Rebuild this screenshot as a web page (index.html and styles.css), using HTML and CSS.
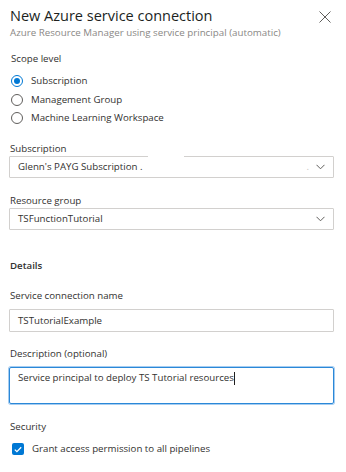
FILE: index.html
```html
<!DOCTYPE html>
<html>
<head>
<meta charset="utf-8">
<link rel="stylesheet" href="styles.css">
</head>
<body>
<div class="panel">
  <div class="header">
    <div class="titles">
      <h1 class="title">New Azure service connection</h1>
      <div class="subtitle">Azure Resource Manager using service principal (automatic)</div>
    </div>
    <svg class="close" width="12" height="12" viewBox="0 0 12 12"><path d="M0.5 0.5L11.5 11.5M11.5 0.5L0.5 11.5" stroke="#605e5c" stroke-width="1" fill="none"/></svg>
  </div>

  <div class="scope">
    <div class="label">Scope level</div>
    <div class="radios">
      <div class="radio-row"><span class="radio checked"></span><span>Subscription</span></div>
      <div class="radio-row"><span class="radio"></span><span>Management Group</span></div>
      <div class="radio-row"><span class="radio"></span><span>Machine Learning Workspace</span></div>
    </div>
  </div>

  <div class="field top-field first">
    <div class="label">Subscription</div>
    <div class="box select">
      <span class="value">Glenn's PAYG Subscription .</span>
      <span class="dot">.</span>
      <svg class="chev" width="9" height="6" viewBox="0 0 9 6"><path d="M0.5 0.8L4.5 4.8L8.5 0.8" stroke="#605e5c" stroke-width="1" fill="none"/></svg>
      <span class="redact"></span>
    </div>
  </div>

  <div class="field top-field">
    <div class="label">Resource group</div>
    <div class="box select">
      <span class="value">TSFunctionTutorial</span>
      <svg class="chev" width="9" height="6" viewBox="0 0 9 6"><path d="M0.5 0.8L4.5 4.8L8.5 0.8" stroke="#605e5c" stroke-width="1" fill="none"/></svg>
    </div>
  </div>

  <div class="section">Details</div>

  <div class="field detail-field">
    <div class="label">Service connection name</div>
    <div class="box"><span class="value">TSTutorialExample</span></div>
  </div>

  <div class="field detail-field">
    <div class="label">Description (optional)</div>
    <div class="box textarea"><span class="value">Service principal to deploy TS Tutorial resources</span><span class="caret"></span></div>
  </div>

  <div class="security">
    <div class="label">Security</div>
    <div class="check-row">
      <span class="checkbox"><svg width="8" height="7" viewBox="0 0 8 7"><path d="M0.8 3.6L2.9 5.6L7.2 1.2" stroke="#fff" stroke-width="1.3" fill="none"/></svg></span>
      <span>Grant access permission to all pipelines</span>
    </div>
  </div>
</div>
</body>
</html>
```

FILE: styles.css
```css
html, body {
  margin: 0;
  padding: 0;
  background: #fff;
}
body {
  font-family: "Open Sans", "Noto Sans", sans-serif;
  color: #323130;
  font-size: 9.7px;
  line-height: 14px;
}
.panel {
  width: 346px;
  height: 472px;
  box-sizing: border-box;
  padding: 6px 12px 0 9px;
}
.header {
  display: flex;
  justify-content: space-between;
  align-items: flex-start;
}
.titles {
  padding-left: 1px;
}
.title {
  margin: 0;
  font-size: 14.5px;
  font-weight: 400;
  line-height: 20px;
  color: #201f1e;
}
.subtitle {
  font-size: 9.75px;
  line-height: 13px;
  color: #8a8886;
}
.close {
  margin-top: 5px;
  margin-right: 3px;
}
.label {
  line-height: 14px;
}
.scope {
  margin-top: 13px;
  padding-left: 2px;
}
.radios {
  margin-top: 8px;
  display: flex;
  flex-direction: column;
  gap: 4.5px;
}
.radio-row {
  display: flex;
  align-items: center;
  gap: 8px;
  height: 14px;
}
.radio {
  width: 12px;
  height: 12px;
  box-sizing: border-box;
  border: 1px solid #605e5c;
  border-radius: 50%;
  flex: none;
}
.radio.checked {
  border-color: #0078d4;
  position: relative;
}
.radio.checked::after {
  content: "";
  position: absolute;
  left: 2px;
  top: 2px;
  width: 6px;
  height: 6px;
  border-radius: 50%;
  background: #0078d4;
}
.field .label {
  padding-left: 1px;
}
.top-field {
  margin-top: 16px;
}
.top-field.first {
  margin-top: 17px;
}
.detail-field {
  margin-top: 16px;
}
.detail-field .label {
  margin-bottom: 6px;
}
.detail-field + .detail-field {
  margin-top: 15px;
}
.box {
  height: 22px;
  box-sizing: border-box;
  border: 1px solid #d2d0ce;
  border-radius: 1px;
  display: flex;
  align-items: center;
  padding: 0 8px;
  position: relative;
}
.detail-field .box {
  height: 23px;
}
.box .value {
  flex: 1;
  white-space: nowrap;
}
.select .chev {
  flex: none;
}
.dot {
  color: #c8c6c4;
  margin-right: 7px;
}
.redact {
  position: absolute;
  left: 138px;
  top: -6px;
  width: 36px;
  height: 7px;
  background: #fff;
}
.section {
  margin-top: 29px;
  padding-left: 1px;
  font-weight: 600;
  line-height: 14px;
}
.detail-field .textarea {
  height: 37px;
  border: 1px solid #2b88d8;
  box-shadow: 0 0 0 1px #a6cdf1;
  border-radius: 2px;
  align-items: flex-start;
  padding-top: 3px;
}
.textarea .value {
  flex: none;
}
.caret {
  width: 1px;
  height: 13px;
  background: #201f1e;
  margin-top: 1px;
}
.security {
  margin-top: 16px;
  padding-left: 1px;
}
.check-row {
  display: flex;
  align-items: center;
  gap: 8px;
  margin-top: 8px;
  padding-left: 2px;
}
.checkbox {
  width: 12px;
  height: 12px;
  border-radius: 2px;
  background: #0078d4;
  display: flex;
  align-items: center;
  justify-content: center;
  flex: none;
}
```
